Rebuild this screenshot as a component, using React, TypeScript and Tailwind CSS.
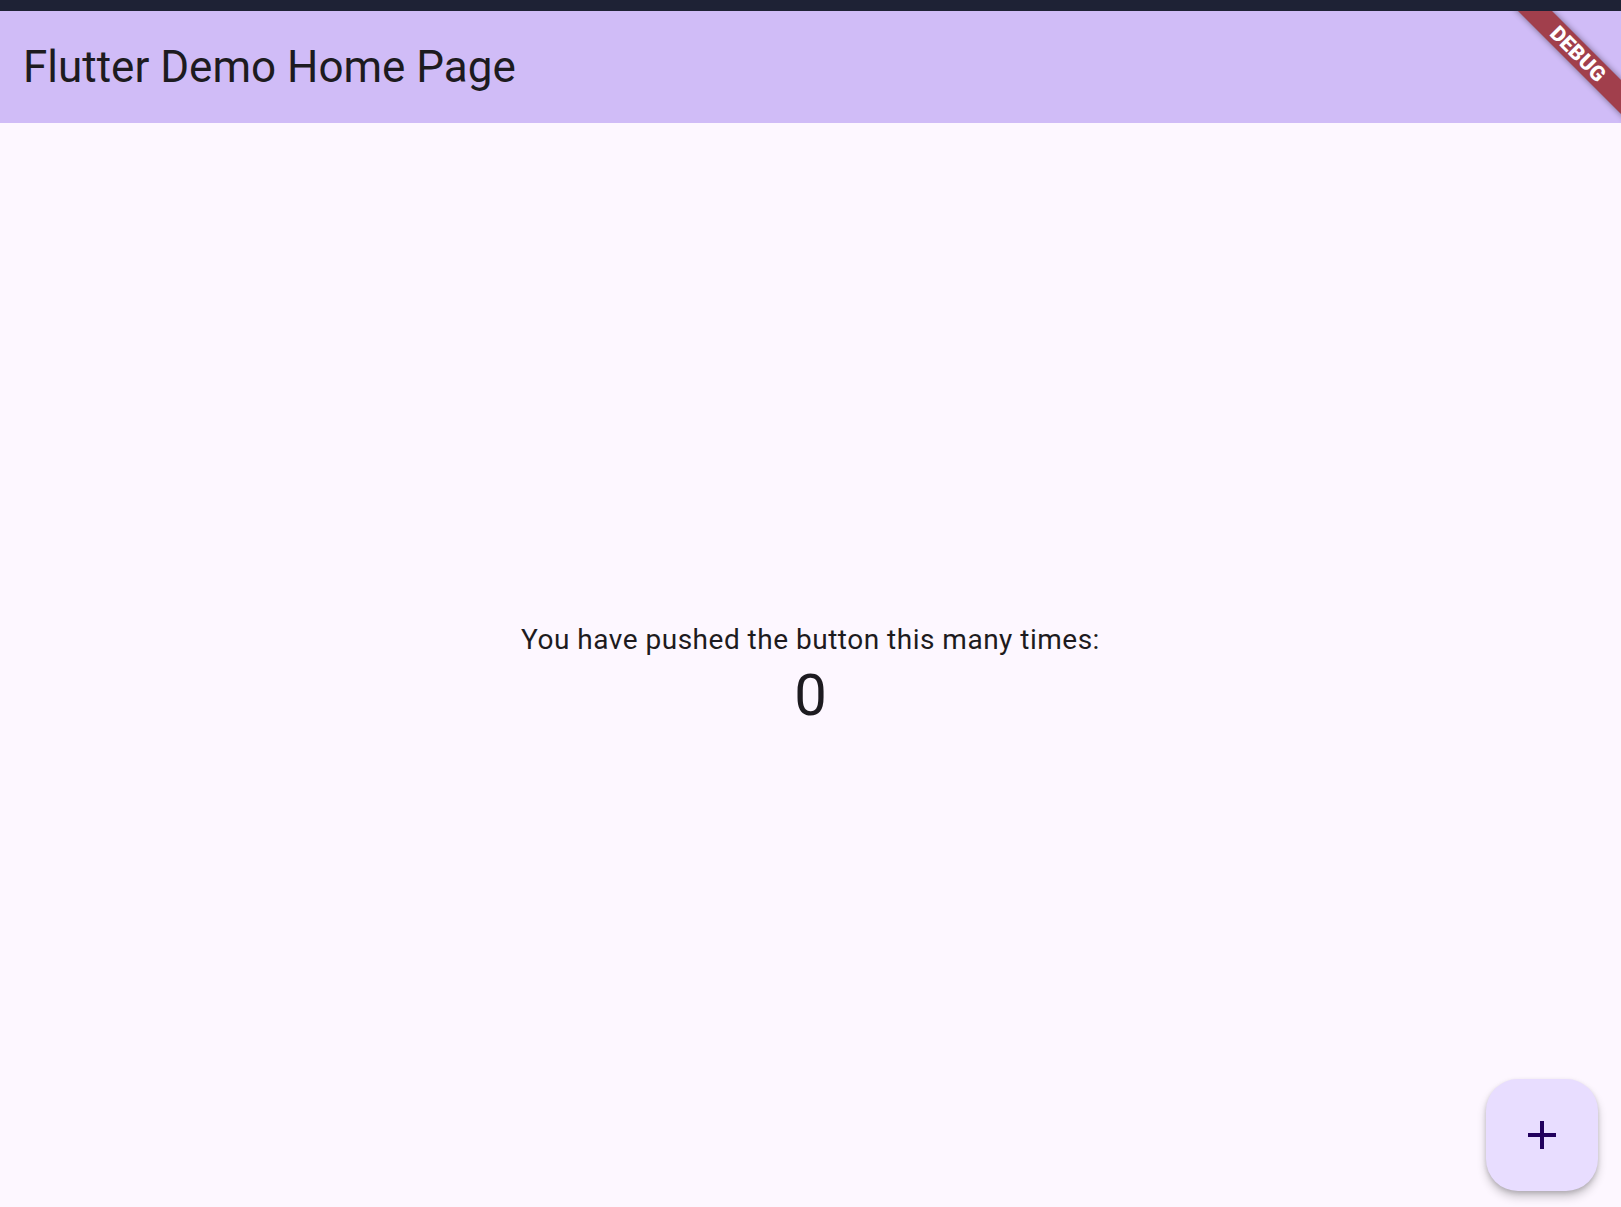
import { useState } from "react";

function DebugBanner() {
  return (
    <div className="pointer-events-none absolute right-0 top-0 h-[120px] w-[120px] overflow-hidden">
      <div className="absolute left-[-3px] top-[31px] flex h-[24px] w-[160px] rotate-45 items-center justify-center bg-[#a13f4c] shadow-[0_0_6px_rgba(0,0,0,0.45)]">
        <span className="text-[21px] font-black leading-none tracking-[0.3px] text-white">DEBUG</span>
      </div>
    </div>
  );
}

export default function App() {
  const [count, setCount] = useState(0);

  return (
    <div
      className="flex h-[1207px] flex-col bg-[#fdf7ff] text-[#1d1b20]"
      style={{ fontFamily: "Roboto, 'Noto Sans', sans-serif" }}
    >
      <div className="h-[11px] shrink-0 bg-[#1e2235]" />
      <header className="relative flex h-[112px] shrink-0 items-center bg-[#d0bcf7] pl-[23px]">
        <h1 className="text-[44px] font-normal leading-none">Flutter Demo Home Page</h1>
        <DebugBanner />
      </header>
      <main className="relative flex flex-1 flex-col items-center justify-center pt-[18px]">
        <p className="text-[28px] leading-[40px] tracking-[0.5px]">You have pushed the button this many times:</p>
        <p className="mt-[1px] text-[58px] leading-[68px]">{count}</p>
        <button
          onClick={() => setCount(count + 1)}
          className="absolute bottom-[16px] right-[23px] flex h-[112px] w-[112px] items-center justify-center rounded-[32px] bg-[#e8ddff] shadow-[0_6px_10px_rgba(0,0,0,0.2),0_2px_4px_rgba(0,0,0,0.15)]"
        >
          <svg width="48" height="48" viewBox="0 0 24 24">
            <path d="M19 13h-6v6h-2v-6H5v-2h6V5h2v6h6v2z" fill="#21005d" />
          </svg>
        </button>
      </main>
    </div>
  );
}
